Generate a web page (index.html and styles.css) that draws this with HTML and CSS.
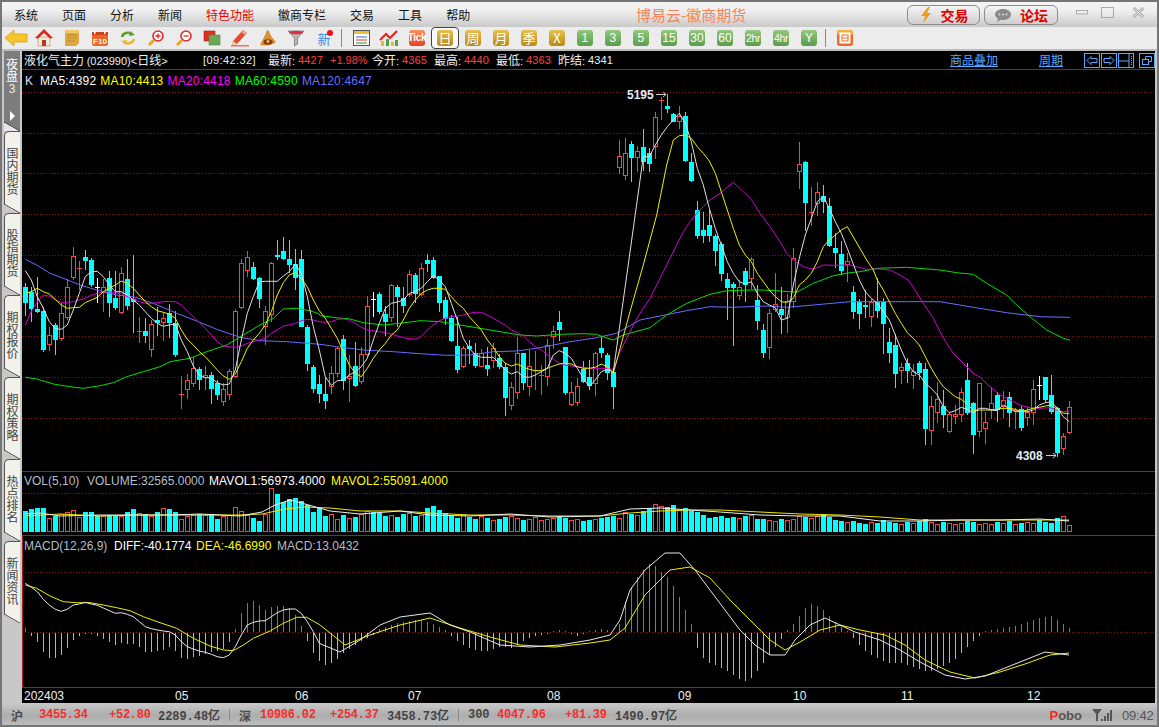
FILE: index.html
```html
<!DOCTYPE html>
<html lang="zh-CN">
<head>
<meta charset="utf-8">
<title>博易云-徽商期货</title>
<link rel="stylesheet" href="styles.css">
</head>
<body>
<div class="window">
  <header class="titlebar">
    <nav class="menu">
      <span>系统</span><span>页面</span><span>分析</span><span>新闻</span><span class="hot">特色功能</span><span>徽商专栏</span><span>交易</span><span>工具</span><span>帮助</span>
    </nav>
    <div class="brand">博易云-徽商期货</div>
    <div class="pill pill-trade">
      <svg width="14" height="18" viewBox="0 0 14 18"><polygon points="9,1 2,10 6,10 4,17 12,7 8,7 11,1" fill="#ee9a20"/></svg>
      <span>交易</span>
    </div>
    <div class="pill pill-forum">
      <svg width="18" height="16" viewBox="0 0 18 16"><path d="M9 2c4.4 0 8 2.4 8 5.5S13.400 13 9 13c-.8 0-1.500 0-2.200-.2L3 15l1-3.300C2.200 10.700 1 9.200 1 7.500 1 4.400 4.600 2 9 2z" fill="#8a8a8a"/><circle cx="5.500" cy="7.500" r="1" fill="#ddd"/><circle cx="9" cy="7.500" r="1" fill="#ddd"/><circle cx="12.500" cy="7.500" r="1" fill="#ddd"/></svg>
      <span>论坛</span>
    </div>
    <div class="winctl">
      <svg width="12" height="5" viewBox="0 0 12 5"><rect x=".5" y=".5" width="11" height="3.500" fill="#eee" stroke="#aaa"/></svg>
      <svg width="13" height="11" viewBox="0 0 13 11"><rect x=".5" y=".5" width="12" height="10" fill="none" stroke="#aaa" stroke-width="1"/><rect x="3" y="3" width="7" height="5" fill="none" stroke="#eee"/></svg>
      <svg width="13" height="11" viewBox="0 0 13 11"><path d="M1.500 1l10 9M11.500 1l-10 9" stroke="#aaa" stroke-width="3"/><path d="M1.500 1l10 9M11.500 1l-10 9" stroke="#f4f4f4" stroke-width="1"/></svg>
    </div>
  </header>

  <div class="toolbar">
    <div class="tool"><svg width="24" height="18" viewBox="0 0 24 18"><polygon points="1,9 10,1 10,5 23,5 23,13 10,13 10,17" fill="#f5c62c" stroke="#d9a010" stroke-width=".8"/></svg></div>
    <div class="tool"><svg width="20" height="20" viewBox="0 0 20 20"><polygon points="4,9 16,9 16,18 4,18" fill="#f4e8d8" stroke="#b08060" stroke-width=".6"/><rect x="8" y="12" width="4" height="6" fill="#b83a20"/><polygon points="10,1 19,10 16,10.500 10,5 4,10.500 1,10" fill="#d8281c"/></svg></div>
    <div class="tool"><svg width="16" height="18" viewBox="0 0 16 18"><path d="M1 1h14v13l-3 3H1z" fill="#e0a840"/><path d="M3 6h10M3 9h10M3 12h8" stroke="#c08a28"/><rect x="1" y="1" width="14" height="3" fill="#f0c868"/></svg></div>
    <div class="tool"><svg width="18" height="17" viewBox="0 0 18 17"><rect x="1" y="2" width="16" height="14" rx="2" fill="#e8662a"/><rect x="1" y="2" width="16" height="3" fill="#c8431c"/><rect x="3" y="1" width="1.500" height="3" fill="#fff"/><rect x="13" y="1" width="1.500" height="3" fill="#fff"/><text x="9" y="14" class="svgf10">F10</text></svg></div>
    <div class="tool"><svg width="18" height="16" viewBox="0 0 18 16"><path d="M3 7a6 5 0 0 1 10-3" fill="none" stroke="#5aa028" stroke-width="2.400"/><polygon points="11,1 16,5 10,6" fill="#5aa028"/><path d="M15 9a6 5 0 0 1-10 3" fill="none" stroke="#e8b82c" stroke-width="2.400"/><polygon points="7,15 2,11 8,10" fill="#e8b82c"/></svg></div>
    <div class="tool"><svg width="18" height="18" viewBox="0 0 18 18"><circle cx="11" cy="7" r="5" fill="#fff" stroke="#e02828" stroke-width="1.600"/><path d="M8.500 7h5M11 4.500v5" stroke="#e02828" stroke-width="1.300"/><path d="M7 11l-5 5" stroke="#e8a820" stroke-width="3"/></svg></div>
    <div class="tool"><svg width="18" height="18" viewBox="0 0 18 18"><circle cx="11" cy="7" r="5" fill="#fff" stroke="#e02828" stroke-width="1.600"/><path d="M8.500 7h5" stroke="#e02828" stroke-width="1.300"/><path d="M7 11l-5 5" stroke="#e8a820" stroke-width="3"/></svg></div>
    <div class="tool"><svg width="18" height="16" viewBox="0 0 18 16"><rect x="1" y="1" width="11" height="10" fill="#e03020" stroke="#a82018" stroke-width=".6"/><rect x="6" y="5" width="11" height="10" fill="#6aa858" stroke="#4c8c40" stroke-width=".6"/></svg></div>
    <div class="tool"><svg width="20" height="18" viewBox="0 0 20 18"><polygon points="3,12 13,1 17,4 7,15 2,16" fill="#e8482c"/><polygon points="13,1 17,4 15,6 11,3" fill="#f0a090"/><polygon points="3,12 7,15 2,16" fill="#f0d8a0"/><rect x="1" y="16" width="18" height="1.500" fill="#e87060"/></svg></div>
    <div class="tool"><svg width="20" height="18" viewBox="0 0 20 18"><path d="M9 1l2 1c1 4 4 8 7 11-3 3-10 4-16 3 2-4 5-9 7-15z" fill="#d89030"/><ellipse cx="10" cy="13" rx="4.500" ry="2.800" fill="#8a3a18"/><circle cx="10" cy="12.500" r="1.400" fill="#f0c060"/></svg></div>
    <div class="tool"><svg width="18" height="18" viewBox="0 0 18 18"><path d="M1 2h16l-6.500 7v6l-3 2V9z" fill="#b8b8b8" stroke="#777" stroke-width=".8"/><ellipse cx="9" cy="3.500" rx="7" ry="1.800" fill="#e03040"/></svg></div>
    <div class="tool tool-new"><span>新</span><i></i></div>
    <div class="sep sep-a"></div>
    <div class="tool"><svg width="17" height="16" viewBox="0 0 17 16"><rect x=".5" y=".5" width="16" height="15" fill="#fff" stroke="#555"/><rect x="1" y="1" width="15" height="3" fill="#e8c040"/><path d="M3 7h11" stroke="#2a6ad0"/><path d="M3 10h11" stroke="#d83020"/><path d="M3 13h11" stroke="#2a9040"/></svg></div>
    <div class="tool"><svg width="20" height="18" viewBox="0 0 20 18"><rect x="2" y="12" width="3" height="5" fill="#e8b838"/><rect x="7" y="10" width="3" height="7" fill="#58a048"/><rect x="12" y="13" width="3" height="4" fill="#e8b838"/><rect x="16" y="11" width="3" height="6" fill="#58a048"/><path d="M1 11l6-6 4 4 7-7" fill="none" stroke="#e02820" stroke-width="2.200"/></svg></div>
    <div class="tool"><span class="btn btn-tick">Tick</span></div>
    <div class="tool tool-selected"><span class="btn btn-gold">日</span></div>
    <div class="tool"><span class="btn btn-gold">周</span></div>
    <div class="tool"><span class="btn btn-gold">月</span></div>
    <div class="tool"><span class="btn btn-gold">季</span></div>
    <div class="tool"><span class="btn btn-gold">X</span></div>
    <div class="tool"><span class="btn btn-green">1</span></div>
    <div class="tool"><span class="btn btn-green">3</span></div>
    <div class="tool"><span class="btn btn-green">5</span></div>
    <div class="tool"><span class="btn btn-green">15</span></div>
    <div class="tool"><span class="btn btn-green">30</span></div>
    <div class="tool"><span class="btn btn-green">60</span></div>
    <div class="tool"><span class="btn btn-green btn-narrow">2hr</span></div>
    <div class="tool"><span class="btn btn-green btn-narrow">4hr</span></div>
    <div class="tool"><span class="btn btn-green">Y</span></div>
    <div class="sep sep-b"></div>
    <div class="tool"><svg width="16" height="16" viewBox="0 0 16 16"><rect width="16" height="16" rx="3" fill="#ee6a28"/><rect x="0" y="0" width="16" height="5" rx="3" fill="#f6b040"/><rect x="3" y="3" width="10" height="10" fill="#fff" stroke="#fff" stroke-width="1"/><rect x="5" y="5" width="6" height="6" fill="none" stroke="#ee6a28"/><path d="M5 8h6" stroke="#ee6a28"/></svg></div>
  </div>
  <div class="toolbar-edge"></div>

  <div class="main">
    <aside class="rail">
      <div class="tab tab-active"><span class="tab-label">夜盘</span><span class="tab-num">3</span><span class="tab-chevron"></span></div>
      <div class="tab"><span class="tab-label">国内期货</span></div>
      <div class="tab"><span class="tab-label">股指期货</span></div>
      <div class="tab"><span class="tab-label">期权报价</span></div>
      <div class="tab"><span class="tab-label">期权策略</span></div>
      <div class="tab"><span class="tab-label">热点排名</span></div>
      <div class="tab"><span class="tab-label">新闻资讯</span></div>
    </aside>

    <section class="chart">
      <div class="infobar">
        <span class="info-title">液化气主力 <span class="latin">(023990)&lt;</span>日线<span class="latin">&gt;</span></span>
        <span class="info-time">[09:42:32]</span>
        <span class="lab">最新<span class="latin">:</span></span><span class="val up">4427</span><span class="chg up">+1.98%</span>
        <span class="lab">今开<span class="latin">:</span></span><span class="val up">4365</span>
        <span class="lab">最高<span class="latin">:</span></span><span class="val up">4440</span>
        <span class="lab">最低<span class="latin">:</span></span><span class="val up">4363</span>
        <span class="lab">昨结<span class="latin">:</span></span><span class="val">4341</span>
        <span class="info-link link-a">商品叠加</span>
        <span class="info-link link-b">周期</span>
        <span class="info-icons">
          <svg width="16" height="15" viewBox="0 0 16 15"><rect x=".5" y=".5" width="15" height="14" fill="none" stroke="#5aa8ff"/><path d="M3 7.500l4-4v2h6v4H7v2z" fill="none" stroke="#5aa8ff"/></svg>
          <svg width="16" height="15" viewBox="0 0 16 15"><rect x=".5" y=".5" width="15" height="14" fill="none" stroke="#5aa8ff"/><path d="M13 7.500l-4-4v2H3v4h6v2z" fill="none" stroke="#5aa8ff"/></svg>
          <svg width="16" height="15" viewBox="0 0 16 15"><rect x=".5" y=".5" width="15" height="14" fill="none" stroke="#5aa8ff"/><path d="M1 8h10M11 1v13" stroke="#5aa8ff"/><path d="M13.500 3v9" stroke="#5aa8ff" stroke-dasharray="1 1"/></svg>
          <svg class="icon-last" width="16" height="15" viewBox="0 0 16 15"><rect x=".5" y=".5" width="15" height="14" fill="none" stroke="#5aa8ff"/><rect x="3.500" y="6.500" width="6" height="5" fill="none" stroke="#5aa8ff"/><path d="M6.500 6.500v-3h6v5h-3" fill="none" stroke="#5aa8ff"/></svg>
        </span>
      </div>

      <div class="panel panel-main">
        <div class="legend legend-main">
          <span class="k">K</span><span class="l-white">MA5:4392</span><span class="l-yellow">MA10:4413</span><span class="l-magenta">MA20:4418</span><span class="l-green">MA60:4590</span><span class="l-blue">MA120:4647</span>
        </div>
        <svg id="main-svg" class="plot" width="1133" height="383" viewBox="22 88 1133 383"></svg>
      </div>

      <div class="panel panel-vol">
        <div class="legend legend-vol">
          <span class="l-gray l1">VOL(5,10)</span><span class="l-gray l2">VOLUME:32565.0000</span><span class="l-white l3">MAVOL1:56973.4000</span><span class="l-yellow">MAVOL2:55091.4000</span>
        </div>
        <svg id="vol-svg" class="plot" width="1133" height="47" viewBox="22 488 1133 47"></svg>
      </div>

      <div class="panel panel-macd">
        <div class="legend legend-macd">
          <span class="l-gray m1">MACD(12,26,9)</span><span class="l-white m2">DIFF:-40.1774</span><span class="l-yellow m3">DEA:-46.6990</span><span class="l-gray">MACD:13.0432</span>
        </div>
        <svg id="macd-svg" class="plot" width="1133" height="133" viewBox="22 554 1133 133"></svg>
      </div>

      <svg class="axis" width="1133" height="15" viewBox="22 688 1133 15">
        <text x="24" y="700">202403</text><text x="175" y="700">05</text><text x="295" y="700">06</text><text x="408" y="700">07</text><text x="547" y="700">08</text><text x="678" y="700">09</text><text x="793" y="700">10</text><text x="901" y="700">11</text><text x="1027" y="700">12</text>
      </svg>
    </section>
  </div>

  <footer class="statusbar">
    <span class="st-name w28">沪</span><span class="st-up w70">3455.34</span><span class="st-up w49">+52.80</span><span class="st-amt w71">2289.48亿</span><span class="st-sep"></span>
    <span class="st-name w21">深</span><span class="st-up w70">10986.02</span><span class="st-up w57">+254.37</span><span class="st-amt w71">3458.73亿</span><span class="st-sep"></span>
    <span class="st-amt w29">300</span><span class="st-up w68">4047.96</span><span class="st-up w50">+81.39</span><span class="st-amt w71">1490.97亿</span>
    <span class="logo"><b>P</b>obo</span>
    <svg class="signal" width="22" height="14" viewBox="0 0 22 14"><path d="M1 1h10L7 6v7H5V6z" fill="#555"/><rect x="10" y="11" width="2" height="2" fill="#555"/><rect x="13" y="8" width="2" height="5" fill="#555"/><rect x="16" y="5" width="2" height="8" fill="#555"/><rect x="19" y="2" width="2" height="11" fill="#555"/></svg>
    <span class="clock">09:42</span>
  </footer>
</div>
<script src="chart.js"></script>
</body>
</html>
```

FILE: styles.css
```css
* { box-sizing: border-box; }
html, body { margin: 0; padding: 0; height: 100%; overflow: hidden; background: #777; }
body { font-family: "Liberation Sans", "Noto Sans CJK SC", sans-serif; font-size: 12px; }

.window {
  width: 1159px; height: 727px; border: 2px solid #757575; background: #c8c8c8;
  display: flex; flex-direction: column;
}

/* title bar */
.titlebar {
  height: 25px; flex: none; display: flex; align-items: center; position: relative;
  background: linear-gradient(#f4f4f4 0, #efefef 35%, #c9c9c9 100%);
  font-family: "Noto Sans CJK SC", sans-serif;
}
.menu { display: flex; gap: 24px; padding-left: 12px; width: 634px; flex: none; color: #111; font-size: 12px; }
.menu .hot { color: #f00000; }
.brand { width: 271px; flex: none; color: #f4855a; font-size: 15px; line-height: 20px; }
.pill {
  height: 20px; display: flex; align-items: center; justify-content: center; gap: 8px; flex: none;
  border: 1px solid #8c8c8c; border-radius: 6px;
  background: linear-gradient(#f4f4f4, #cfcfcf);
  color: #e00000; font-size: 14px; font-weight: 700;
}
.pill-trade { width: 73px; margin-right: 4px; }
.pill-forum { width: 74px; }
.winctl { display: flex; align-items: center; gap: 13px; margin: -5px 0 0 18px; }
.winctl svg:nth-child(2) { margin-right: 5px; }

/* toolbar */
.toolbar { height: 22px; flex: none; display: flex; align-items: center; background: #ececec; }
.toolbar-edge { height: 2px; flex: none; background: #bdbdbd; }
.tool { width: 28px; height: 22px; display: flex; align-items: center; justify-content: center; position: relative; }
.tool-selected { border: 1px solid #444; border-radius: 4px; background: #fafafa; }
.tool-new span { color: #3a8ae0; font: 13px "Noto Sans CJK SC", sans-serif; }
.tool-new i { position: absolute; right: 5px; top: 3px; width: 6px; height: 6px; border-radius: 50%; background: #f01010; }
.sep { height: 18px; border-left: 1px solid #888; flex: none; }
.sep-a { width: 9px; margin-left: 0; position: relative; left: 3px; }
.sep-b { width: 8px; position: relative; left: 2px; }
.btn {
  width: 16px; height: 16px; border-radius: 3px; display: flex; align-items: center; justify-content: center;
  color: #fff; font: 13px/16px "Noto Sans CJK SC", sans-serif;
}
.btn-gold { background: linear-gradient(#e8c050, #b88a14); }
.btn-green { background: linear-gradient(#92c87c, #5c9c4c); font: 12px/16px "Liberation Sans", sans-serif; letter-spacing: .2px; }
.btn-narrow { font-size: 10.500px; letter-spacing: -.4px; }
.btn-tick { background: linear-gradient(#f89060, #e84020); font: 700 10px/16px "Liberation Sans", sans-serif; letter-spacing: -.3px; }

/* body */
.main { flex: 1; display: flex; min-height: 0; }
.rail { width: 20px; flex: none; background: #c8c8c8; display: flex; flex-direction: column; }
.tab {
  width: 16px; height: 82px; flex: none; margin-left: 2px; position: relative;
  background: #f2f1ea; border-left: 1px solid #555; border-top: 1px solid #555; border-top-left-radius: 5px;
  color: #444; font: 12px/12px "Noto Sans CJK SC", sans-serif;
  display: flex; flex-direction: column; align-items: center; padding-top: 15px;
}
.tab::after {
  content: ""; position: absolute; left: -1px; right: 0; bottom: 0; height: 9px;
  background: linear-gradient(to top right, #c8c8c8 46%, #666 48%, #666 52%, #f2f1ea 54%);
}
.tab-label { width: 12px; text-align: center; word-break: break-all; }
.tab-active { height: 80px; background: #7d7d7d; border: 0; border-radius: 0; color: #fff; padding-top: 7px; }
.tab-active::after { left: 0; background: linear-gradient(to top right, #e6e6e6 46%, #555 48%, #555 52%, #7d7d7d 54%); }
.tab-num { font: 12px/14px "Liberation Sans", sans-serif; color: #eee; }
.tab-chevron {
  margin-top: 15px; width: 0; height: 0;
  border-left: 5px solid #fff; border-top: 5px solid transparent; border-bottom: 5px solid transparent;
}

.chart { width: 1133px; flex: none; background: #000; display: flex; flex-direction: column; color: #fff; }
.infobar {
  height: 19px; flex: none; display: flex; align-items: center; padding-left: 2px;
  border-bottom: 1px solid #a81c14;
  font: 12px/16px "Noto Sans CJK SC", sans-serif; color: #eee;
}
.latin { font: 11px "Liberation Sans", sans-serif; }
.info-title { width: 179px; flex: none; }
.info-time { width: 65px; flex: none; font: 11px "Liberation Sans", sans-serif; letter-spacing: .4px; }
.lab { width: 30px; flex: none; }
.val { width: 32px; flex: none; font: 11px "Liberation Sans", sans-serif; letter-spacing: .1px; }
.chg { width: 42px; flex: none; font: 11px "Liberation Sans", sans-serif; }
.up { color: #ff4040; }
.info-link { color: #5aa8ff; text-decoration: underline; flex: none; }
.link-a { margin-left: 330px; }
.link-b { margin-left: 41px; }
.info-icons { display: flex; gap: 1px; margin-left: 21px; flex: none; }
.info-icons svg { flex: none; }
.info-icons .icon-last { margin-left: 4px; }

.panel { flex: none; display: flex; flex-direction: column; border-bottom: 1px solid #a81c14; }
.panel-main { height: 402px; }
.panel-vol { height: 64px; }
.panel-macd { height: 152px; border-left: 1px solid #a81c14; }
.panel-macd .plot { margin-left: -1px; }
.plot { display: block; flex: none; overflow: visible; }
.legend { display: flex; align-items: center; padding-left: 2px; padding-top: 2px; font: 12px/16px "Liberation Sans", sans-serif; flex: none; white-space: nowrap; }
.legend-main { height: 18px; padding-left: 3px; padding-top: 3px; letter-spacing: .2px; }
.legend-main span { margin-right: 4px; }
.legend-main .k { width: 15px; margin-right: 0; color: #cfe0ff; }
.legend-vol { height: 16px; }
.legend-macd { height: 18px; padding-left: 1px; }
.l1 { width: 63px; }
.l2 { width: 122px; }
.l3 { width: 122px; letter-spacing: .1px; }
.l3 + .l-yellow { letter-spacing: .15px; }
.m1 { width: 90px; }
.m2 { width: 82px; }
.m3 { width: 81px; }
.l-white { color: #fff; }
.l-yellow { color: #ffff00; }
.l-magenta { color: #ff00ff; }
.l-green { color: #00ff00; }
.l-blue { color: #6070ff; }
.l-gray { color: #b4bfcc; }

.axis { display: block; flex: none; }
.axis text { fill: #f0f0f0; font: 12px "Liberation Sans", sans-serif; }
.mark { fill: #e4ecf8; font: 700 12px "Liberation Sans", sans-serif; }
.svgf10 { fill: #fff; font: 700 8px "Liberation Sans", sans-serif; text-anchor: middle; }

/* status bar */
.statusbar {
  height: 22px; flex: none; display: flex; align-items: center; padding: 2px 0 0 9px;
  background: linear-gradient(#c9c9c9, #adadad 55%, #bcbcbc);
  font: 700 12px "Liberation Mono", monospace;
}
.statusbar > span { flex: none; }
.st-name { color: #4a4a4a; font-family: "Noto Sans CJK SC", sans-serif; font-size: 12px; }
.st-up { color: #f82c2c; letter-spacing: -.25px; }
.st-amt { color: #444; letter-spacing: -.05px; }
.st-sep { width: 1px; height: 12px; background: #8a8a8a; margin-right: 9px; }
.w21 { width: 21px; }
.w28 { width: 28px; }
.w29 { width: 29px; }
.w49 { width: 49px; }
.w50 { width: 50px; }
.w57 { width: 57px; }
.w68 { width: 68px; }
.w70 { width: 70px; }
.w71 { width: 71px; }
.logo { margin-left: auto; color: #555; font: 700 13px "Liberation Sans", sans-serif; }
.logo b { color: #f02828; }
.signal { margin-left: 9px; flex: none; }
.clock { margin: 0 3px 0 9px; width: 32px; color: #555; font: 13px "Liberation Sans", sans-serif; letter-spacing: -.2px; }
```

FILE: chart.js
```javascript
(function () {
  var NS = 'http://www.w3.org/2000/svg';
  var CYAN = '#00ffff', RED = '#ff4040', GRID = '#8c1010';

  function el(parent, tag, attrs, text) {
    var n = document.createElementNS(NS, tag);
    for (var a in attrs) n.setAttribute(a, attrs[a]);
    if (text) n.textContent = text;
    parent.appendChild(n);
    return n;
  }

  /* candles: type, body top, body bottom, high, low -- given in 3x crop units */
  var SEGMENTS = [
    [240, 'c141 188 130 228|c155 208 140 245|c207 216 112 220|c212 330 200 335|r286 314 262 332|c255 300 250 346|r220 298 190 302|r142 234 118 240|r48 115 22 120|r84 89 64 150|c51 63 30 90|c60 136 55 140|w142 145 115 188|r142 160 118 215|c114 188 92 230|c174 204 92 210|r100 218 80 222|c118 197 58 210|c178 185 45 278|r272 275 232 308|c273 287 235 310|r252 331 240 350|c240 248 200 288|r235 248 215 303|c220 250 192 295|c248 345 212 350|r461 464 408 506|r421 451 402 476|r385 433 352 442|c388 420 380 450|r406 414 378 450|c404 446 396 492|c428 465 420 480|r448 487 430 497|r394 464 388 480|r214 412 208 415|r70 205 56 208|r52 92 34 110|c82 116 65 120|c115 176 110 205|r212 262 198 315|r70 226 65 245|c45 50 0 60|c33 57 -10 60|c57 75 0 100|c72 113 28 150|c58 260 30 262|c261 372 255 392|c380 446 375 458|c432 462 405 488'],
    [240, 'c462 482 412 506|r400 440 378 462|r324 402 320 410|c297 422 284 450|r408 416 345 486|c378 438 306 442|r343 425 320 432|r198 345 168 348|w178 180 156 230|c162 216 155 222|c222 246 198 288|r136 235 132 245|c141 171 135 262|c174 198 140 220|r102 164 90 170|c105 163 100 190|r84 164 70 168|c60 72 42 95|c60 114 52 116|c108 188 108 215|c180 236 170 255|c234 303 225 305|c318 389 230 400|r324 380 318 385|c318 327 300 372|c338 378 310 385|r340 380 326 382|c375 386 322 408|r324 364 310 385|c354 382 342 388|c381 474 370 528|r442 497 425 510|r340 460 290 478|c340 428 338 450|r378 440 330 468|r390 395 332 450|r406 410 375 465|r316 412 298 438|r274 290 258 328|c246 270 213 304|c322 458 320 465|r457 496 425 498|r439 488 415 498|c387 426 362 430|c411 438 360 450|r340 432 335 468|c324 340 292 354|c346 398 340 420|c396 441 388 508'],
    [85, 'r214 250 165 266|r205 272 160 285|c177 218 168 290|r199 218 184 262|c186 230 132 258|c205 236 188 262|r97 187 82 222|r44 47 36 104|c63 72 28 84|c87 110 85 112|r94 110 64 132|c94 228 82 230|c231 288 205 290|c376 452 348 462|c436 452 380 475|c421 454 375 472|c453 498 448 544|c476 567 472 588|c582 609 565 706|c598 609 592 782|r607 632 585 645|c559 599 550 650|r523 581 516 612|c645 707 600 735|c736 803 718 818|r685 790 672 822|r656 674 565 680|c672 690 606 746|r649 700 627 744|r520 652 490 670|r238 260 172 312|c231 353 228 438|r382 386 305 422|r322 356 290 392|c334 350 300 385|c363 483 340 486|c489 503 445 550|c507 557 467 570|r529 541 505 590'],
    [260, 'c96 156 78 177|c126 162 118 207|c135 140 90 175|r126 170 118 200|c126 152 55 175|c126 192 115 282|c246 278 204 310|c255 342 222 384|r322 332 310 372|c309 333 294 368|r333 347 312 388|c309 338 302 360|c327 507 310 555|r438 512 408 555|r418 458 366 490|c438 465 390 505|r462 515 455 520|r462 472 435 492|r397 466 385 485|c360 458 310 465|c428 524 425 582|r370 515 368 532|r487 508 455 552|r430 450 380 478|c405 451 395 486|r420 440 392 474|c411 458 395 500|r449 457 445 508|c447 503 438 512|r456 475 440 498|r388 458 360 496|w376 378 348 420|c352 420 350 428|c405 456 345 462|c445 580 440 590|r528 568 518 585|r442 518 424 522']
  ];

  var candles = [];
  SEGMENTS.forEach(function (seg) {
    seg[1].split('|').forEach(function (s) {
      var v = s.slice(1).split(' ').map(Number);
      candles.push({
        t: s[0],
        top: Math.round(seg[0] + v[0] / 3),
        bot: Math.round(seg[0] + v[1] / 3),
        hi: Math.round(seg[0] + v[2] / 3),
        lo: Math.round(seg[0] + v[3] / 3)
      });
    });
  });

  /* crop-space point list to page coordinates */
  function pts(x0, y0, s) {
    return s.split(' ').map(function (p) {
      var a = p.split(',');
      return (x0 + a[0] / 3).toFixed(1) + ',' + (y0 + a[1] / 3).toFixed(1);
    }).join(' ');
  }
  function line(svg, color, points, width) {
    el(svg, 'polyline', { points: points, fill: 'none', stroke: color, 'stroke-width': width || 1, 'stroke-linejoin': 'round' });
  }
  function grid(svg, ys) {
    ys.forEach(function (y) {
      el(svg, 'line', { x1: 22, x2: 1155, y1: y + 0.5, y2: y + 0.5, stroke: GRID, 'stroke-dasharray': '1 2', 'shape-rendering': 'crispEdges' });
    });
  }
  function rect(svg, x, y, w, h, attrs) {
    var a = { x: x, y: y, width: w, height: h, 'shape-rendering': 'crispEdges' };
    for (var k in attrs) a[k] = attrs[k];
    el(svg, 'rect', a);
  }

  /* ---- price panel ---- */
  var main = document.getElementById('main-svg');
  grid(main, [92, 133, 173, 214, 255, 296, 336, 377, 418]);
  candles.forEach(function (c, i) {
    var cx = 25 + 6 * i;
    var col = c.t === 'r' ? RED : c.t === 'w' ? '#ffffff' : CYAN;
    rect(main, cx, c.hi, 1, c.lo - c.hi, { fill: col });
    if (c.t === 'c') rect(main, cx - 2, c.top, 5, Math.max(c.bot - c.top, 1), { fill: col });
    else if (c.t === 'w') rect(main, cx - 2, c.top, 5, 1, { fill: col });
    else if (c.bot - c.top < 3) rect(main, cx - 2, c.top, 5, 1, { fill: col });
    else rect(main, cx - 1.5, c.top + 0.5, 4, c.bot - c.top - 1, { fill: '#000', stroke: col });
  });

  var white = [
    pts(20, 240, '16,92 34,120 52,170 70,205 88,245 106,266 124,268 142,255 160,210 178,160 196,110 214,95 232,94 250,110 268,135 286,155 304,155 322,165 340,180 358,195 376,215 394,235 412,250 430,259 448,255 466,252 484,300 502,335 520,378 538,405 556,413 574,414 592,428 610,435 628,432 646,390 664,300 682,220 700,170 718,125 736,124 754,124 772,124 790,108 808,95 826,73 844,100 862,170 880,260 898,330'),
    pts(320, 240, '16,410 34,436 52,422 70,420 88,405 106,395 124,380 142,355 160,300 178,250 196,205 214,190 232,186 250,180 268,160 286,155 304,145 322,125 340,107 358,120 376,140 394,190 412,240 430,295 448,325 466,345 484,352 502,352 520,352 538,370 556,390 574,402 592,395 610,410 628,412 646,405 664,395 682,385 700,345 718,332 736,340 754,355 772,385 790,415 808,440 826,420 844,395 862,388 880,395'),
    pts(600, 85, '130,215 148,215 166,180 184,150 202,125 220,105 238,85 256,115 274,170 292,250 310,300 328,370 346,430 364,480 382,530 400,565 418,590 436,597 454,590 472,625 490,650 508,660 526,668 544,705 562,700 580,600 598,520 616,450 634,400 652,350 670,335 688,370 706,410 724,445 742,490'),
    pts(840, 260, '58,60 76,95 94,115 112,130 130,155 148,180 166,225 184,270 202,310 220,335 238,345 256,370 274,385 292,405 310,440 328,458 346,452 364,442 382,448 400,458 418,445 436,445 454,450 472,452 490,435 508,445 526,455 544,455 562,455 580,450 598,435 616,428 634,425 652,445 670,470 688,485')
  ].join(' ');
  var yellow = [
    pts(20, 240, '16,160 34,155 52,145 70,155 88,162 106,178 124,195 142,205 160,203 178,202 196,188 214,180 232,172 250,155 268,145 286,135 304,123 322,130 340,145 358,165 376,185 394,200 412,212 430,217 448,222 466,235 484,270 502,298 520,315 538,335 556,350 574,370 592,390 610,408 628,418 646,402 664,365 682,325 700,300 718,280 736,255 754,215 772,165 790,128 808,105 826,98 844,115 862,140 880,180 898,212'),
    pts(320, 240, '16,235 34,265 52,295 70,335 88,375 106,400 124,410 142,385 160,355 178,330 196,310 214,285 232,270 250,240 268,205 286,180 304,160 322,150 340,145 358,145 376,148 394,170 412,190 430,205 448,230 466,250 484,270 502,300 520,322 538,350 556,370 574,378 592,372 610,382 628,388 646,392 664,392 682,385 700,378 718,372 736,370 754,372 772,380 790,385 808,385 826,382 844,372 862,380 880,400'),
    pts(600, 85, '90,680 130,540 170,390 200,240 220,165 238,152 256,150 274,160 292,185 310,205 328,228 346,265 364,320 382,375 400,430 418,480 436,510 454,530 472,565 490,590 508,615 526,635 544,650 562,652 580,640 598,600 616,585 634,565 652,530 670,485 688,465 706,450 724,435 742,425'),
    pts(840, 260, '80,0 100,30 112,60 130,90 148,125 166,160 184,190 202,218 220,235 238,255 256,290 274,325 292,355 310,380 328,395 346,410 364,418 382,432 400,452 418,450 436,450 454,450 472,448 490,445 508,445 526,448 544,455 562,450 580,445 598,442 616,438 634,435 652,448 670,460 688,460')
  ].join(' ');
  var magenta = [
    pts(20, 240, '16,255 34,215 52,185 70,165 88,168 106,180 124,187 142,187 160,185 178,180 196,175 214,165 232,160 250,155 268,155 286,158 304,160 322,170 340,178 358,185 376,190 394,190 412,188 430,185 448,184 466,185 484,195 502,212 520,230 538,248 556,265 574,285 592,305 610,318 628,320 646,322 664,318 682,310 700,305 718,300 736,295 754,280 772,270 790,258 808,255 826,250 844,242 862,238 880,240 898,245'),
    pts(320, 240, '16,247 34,245 52,238 70,237 88,240 106,250 124,262 142,270 160,272 178,275 196,278 214,282 232,288 250,293 268,296 286,298 304,290 322,270 340,255 358,242 376,235 394,230 412,228 430,225 448,220 466,217 484,217 502,225 520,235 538,245 556,255 574,270 592,278 610,288 628,305 646,320 664,330 682,345 700,358 718,370 736,375 754,378 772,380 790,382 808,385 826,385 844,385 862,385 880,388'),
    pts(600, 85, '60,800 80,760 100,720 120,685 150,640 170,600 190,560 210,520 230,480 250,440 270,410 290,385 310,365 330,345 360,325 400,292 430,320 455,345 480,385 510,425 540,470 560,505 580,525 610,545 640,553 670,540 700,541 750,540'),
    pts(840, 260, '40,18 80,28 120,27 150,30 180,45 205,60 225,90 250,130 280,175 300,215 320,250 340,280 370,310 400,340 420,352 450,380 480,405 510,420 540,435 570,443 600,445 630,443 650,450 670,455 690,452')
  ].join(' ');
  var green = [
    pts(20, 240, '16,412 50,417 100,432 150,440 190,445 240,437 280,428 320,410 370,395 420,380 450,365 510,355 560,335 620,315 670,285 720,255 760,235 790,207 830,205 870,212 898,222'),
    pts(320, 240, '0,227 50,233 90,237 130,248 190,255 240,250 300,242 360,245 420,255 480,265 540,275 600,285 650,288 720,283 790,281 830,283'),
    pts(600, 85, '0,752 40,765 70,750 150,728 200,690 260,655 330,628 380,617 450,615 490,615 540,618 590,622 640,595 700,572 750,563'),
    pts(840, 260, '60,35 110,25 200,22 300,30 350,38 400,43 440,70 500,105 530,135 570,170 620,210 670,235 690,241')
  ].join(' ');
  var blue = [
    pts(20, 240, '16,58 50,75 90,100 130,115 180,135 230,150 290,165 340,170 400,190 470,220 530,243 590,268 660,292 720,302 800,305 900,313'),
    pts(320, 240, '50,320 130,330 220,335 300,341 380,346 450,345 520,335 590,333 660,323 750,305 820,295'),
    pts(600, 85, '50,745 120,705 180,693 260,677 330,665 400,667 500,663 560,667 640,660 750,650'),
    pts(840, 260, '100,125 200,125 300,125 400,142 500,158 600,170 690,172')
  ].join(' ');
  line(main, '#6a6aff', blue);
  line(main, '#00e000', green);
  line(main, '#d000d0', magenta);
  line(main, '#f0f000', yellow);
  line(main, '#e0e0e0', white);

  el(main, 'text', { x: 627, y: 99, 'class': 'mark' }, '5195');
  el(main, 'path', { d: 'M656 94.500h10M663 92l3 2.500-3 2.500', fill: 'none', stroke: '#ccc' });
  el(main, 'text', { x: 1016, y: 460, 'class': 'mark' }, '4308');
  el(main, 'path', { d: 'M1046 455.500h10M1053 453l3 2.500-3 2.500', fill: 'none', stroke: '#ccc' });

  /* ---- volume panel ---- */
  var vol = document.getElementById('vol-svg');
  grid(vol, [493]);
  var BASE = 532;
  var volTopCrop = [122,117,114,114,145,137,133,127,121,141,126,127,137,137,136,137,137,126,117,128,133,137,126,115,117,125,148,138,134,133,135,133,147,137,135,112,124,135,144,153,133,55,72,95,88,85,92,105,126,114];
  var volH = [16,18,13,17,14,15,18,21,20,19,16,17,15,18,19,16,17,24,26,22,19,16,14,17,15,13,16,14,12,13,15,16,14,12,13,15,12,13,14,16,14,12,13,11,12,13,14,15,16,14,20,18,17,21,24,28,26,25,27,22,24,21,20,17,14,15,16,14,15,14,16,17,13,13,12,11,13,12,13,16,15,14,16,18,15,12,11,10,11,9,8,10,9,12,10,9,8,10,9,11,13,10,8,10,9,8,9,11,10,8,9,8,10,9,11,8,9,10,9,12,10,9,14,16,7];
  candles.forEach(function (c, i) {
    var top = i < 50 ? Math.round(470 + volTopCrop[i] / 3) : BASE - volH[i - 50];
    var cx = 23 + 6 * i;
    if (c.t === 'r') rect(vol, cx + 0.5, top + 0.5, 4, BASE - top - 1, { fill: '#000', stroke: RED });
    else rect(vol, cx, top, 5, BASE - top, { fill: CYAN });
  });
  line(vol, '#f0e800', '25,516 60,514 100,516 140,515 170,515 200,515 240,515 262,514 285,509 305,507 330,508 360,511 400,511 430,513 470,515 510,515 550,516 600,516 630,513 660,511 690,510 720,510 760,512 800,514 840,515 880,517 920,520 960,520 1000,520 1040,520 1069,520');
  line(vol, '#eeeeee', '25,514 40,513 60,516 100,515 140,515 170,515 200,514 240,516 262,512 275,505 290,500 305,504 330,511 360,514 400,511 430,515 470,516 510,514 550,517 600,516 630,509 660,508 690,510 720,512 760,515 800,516 840,516 880,521 920,521 960,520 1000,520 1040,519 1069,521');

  /* ---- MACD panel ---- */
  var macd = document.getElementById('macd-svg');
  grid(macd, [572, 632]);
  var macdCrop = [474,497,515,545,563,563,553,533,507,495,490,490,497,505,513,522,516,519,520,528,545,545,540,538,530,540,562,566,560,555,550,545,540,535,515,477,430,400,393,405,420,412,408,410,415,435,470,510,548,570];
  var macdRest = [-32,-30,-26,-20,-16,-12,-8,-5,-2,3,5,7,9,10,11,12,12,10,8,5,2,-3,-8,-12,-15,-17,-18,-18,-16,-14,-14,-15,-12,-8,-5,-3,-2,-1,1,2,1,-1,-3,-1,1,2,3,2,0,8,30,45,55,62,68,66,60,55,46,35,22,8,-15,-25,-30,-32,-35,-38,-42,-46,-48,-45,-38,-30,-22,-14,-6,2,8,16,24,28,26,22,16,10,5,1,-5,-12,-18,-22,-25,-28,-30,-30,-30,-32,-34,-36,-38,-38,-36,-33,-30,-26,-20,-14,-8,-3,1,2,3,4,5,6,8,10,12,14,15,16,12,8,4];
  var ZERO = 632;
  for (var i = 0; i < 175; i++) {
    var v = i < 50 ? Math.round(ZERO + 0.3 - (470 + macdCrop[i] / 3)) : macdRest[i - 50];
    if (!v) continue;
    var x = 25 + 6 * i;
    if (v > 0) rect(macd, x, ZERO - v, 1, v, { fill: RED });
    else rect(macd, x, ZERO + 1, 1, -v, { fill: CYAN });
  }
  line(macd, '#f0f000', pts(20, 470, '16,345 50,355 90,378 130,395 170,398 210,398 250,405 290,413 330,422 370,440 420,458 470,475 520,505 570,528 610,540 640,542 670,525 700,505 750,483 790,460 830,442 860,442 900,465') + ' 345,645 370,635 400,625 430,618 460,628 490,637 520,645 555,647 590,643 610,640 625,628 645,595 670,570 690,567 710,578 730,600 750,620 770,640 785,650 800,642 820,630 840,625 860,630 885,635 905,645 925,660 950,672 975,678 1000,672 1025,664 1050,655 1069,653');
  line(macd, '#e8e8e8', pts(20, 470, '16,340 34,352 52,365 70,388 88,405 106,418 124,424 142,418 160,405 178,402 196,397 214,402 232,406 250,414 268,422 286,430 304,428 322,433 340,440 358,455 376,470 394,476 412,480 430,483 448,485 466,495 484,515 502,530 520,537 538,543 556,547 574,553 592,560 610,563 628,555 646,530 664,495 682,465 700,457 718,453 736,452 754,440 772,428 790,420 808,417 826,417 844,430 862,455 880,485 898,520') + ' 340,652 360,640 380,625 400,617 430,613 450,625 470,632 500,645 530,647 560,645 590,640 610,635 620,620 630,590 645,570 665,553 680,553 695,570 710,590 725,610 740,630 755,645 770,655 785,655 795,640 810,625 825,618 840,625 855,632 880,640 900,650 920,662 945,675 965,679 985,676 1005,668 1025,660 1045,652 1069,655');
})();
```
